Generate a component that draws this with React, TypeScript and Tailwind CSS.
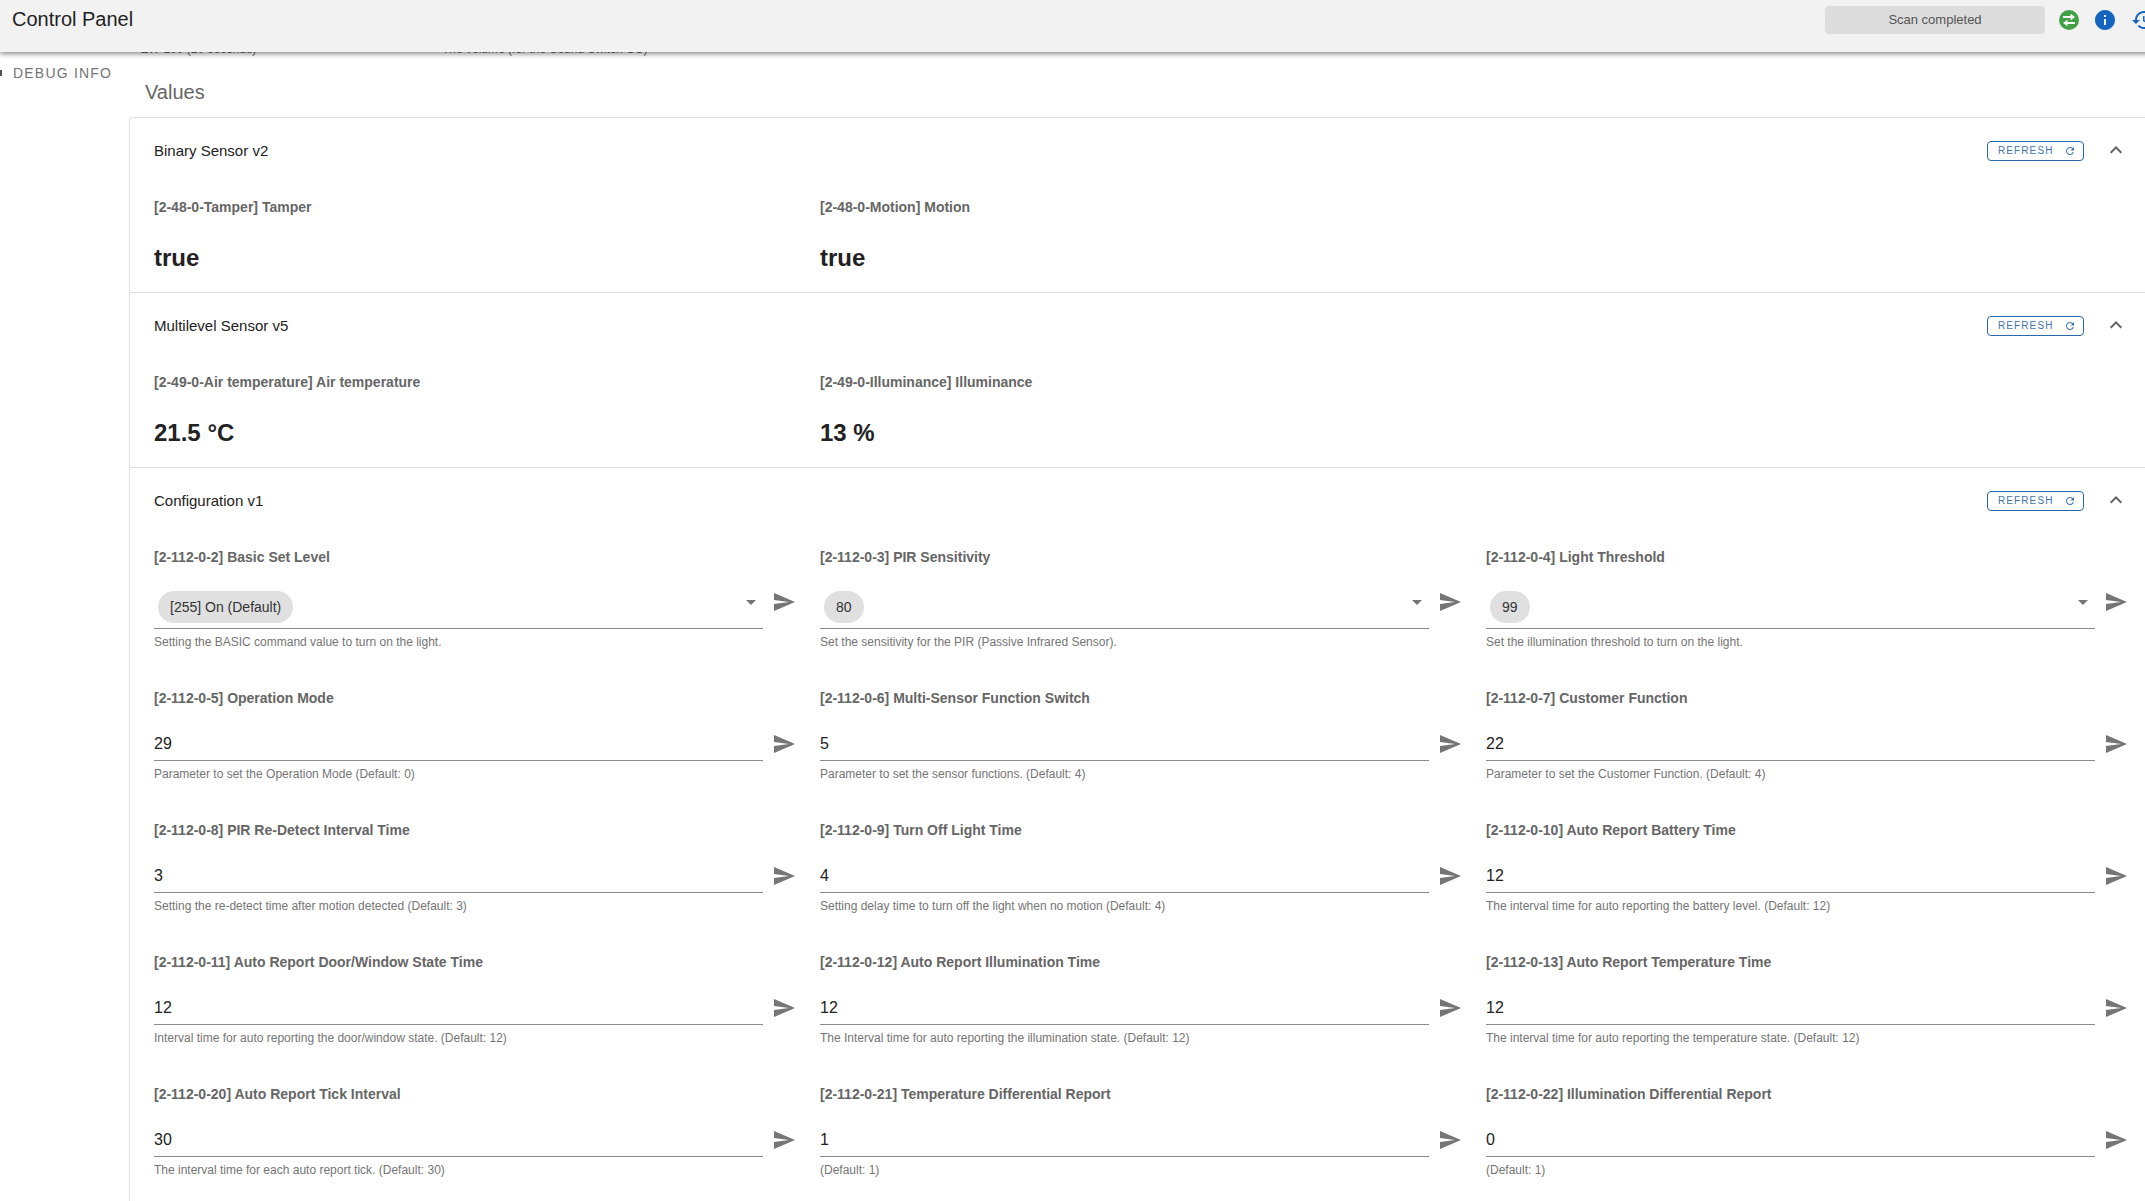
type Field = { label: string; value: string; help: string; chip?: boolean }

const configFields: Field[] = [
    { label: "[2-112-0-2] Basic Set Level", value: "[255] On (Default)", help: "Setting the BASIC command value to turn on the light.", chip: true },
    { label: "[2-112-0-3] PIR Sensitivity", value: "80", help: "Set the sensitivity for the PIR (Passive Infrared Sensor).", chip: true },
    { label: "[2-112-0-4] Light Threshold", value: "99", help: "Set the illumination threshold to turn on the light.", chip: true },
    { label: "[2-112-0-5] Operation Mode", value: "29", help: "Parameter to set the Operation Mode (Default: 0)" },
    { label: "[2-112-0-6] Multi-Sensor Function Switch", value: "5", help: "Parameter to set the sensor functions. (Default: 4)" },
    { label: "[2-112-0-7] Customer Function", value: "22", help: "Parameter to set the Customer Function. (Default: 4)" },
    { label: "[2-112-0-8] PIR Re-Detect Interval Time", value: "3", help: "Setting the re-detect time after motion detected (Default: 3)" },
    { label: "[2-112-0-9] Turn Off Light Time", value: "4", help: "Setting delay time to turn off the light when no motion (Default: 4)" },
    { label: "[2-112-0-10] Auto Report Battery Time", value: "12", help: "The interval time for auto reporting the battery level. (Default: 12)" },
    { label: "[2-112-0-11] Auto Report Door/Window State Time", value: "12", help: "Interval time for auto reporting the door/window state. (Default: 12)" },
    { label: "[2-112-0-12] Auto Report Illumination Time", value: "12", help: "The Interval time for auto reporting the illumination state. (Default: 12)" },
    { label: "[2-112-0-13] Auto Report Temperature Time", value: "12", help: "The interval time for auto reporting the temperature state. (Default: 12)" },
    { label: "[2-112-0-20] Auto Report Tick Interval", value: "30", help: "The interval time for each auto report tick. (Default: 30)" },
    { label: "[2-112-0-21] Temperature Differential Report", value: "1", help: "(Default: 1)" },
    { label: "[2-112-0-22] Illumination Differential Report", value: "0", help: "(Default: 1)" },
]

function MuiIcon({ d, className }: { d: string; className: string }) {
    return (
        <svg viewBox="0 0 24 24" fill="currentColor" className={className}>
            <path d={d} />
        </svg>
    )
}

function SectionHeader({ title }: { title: string }) {
    return (
        <div className="flex h-[67px] items-center pb-[2px] pl-6">
            <div className="w-[1833px] text-[15px] leading-6 text-[#222222]">{title}</div>
            <div className="flex h-5 w-[97px] items-center rounded-[4px] border border-[#2a69ac] pl-[10px] text-[10px] tracking-[1.1px] text-[#3f74ad]">
                REFRESH
                <MuiIcon className="ml-[11px] h-3 w-3" d="M17.65 6.35C16.2 4.9 14.21 4 12 4c-4.42 0-7.99 3.58-7.99 8s3.57 8 7.99 8c3.73 0 6.84-2.55 7.73-6h-2.08c-.82 2.33-3.04 4-5.65 4-3.31 0-6-2.69-6-6s2.69-6 6-6c1.66 0 3.14.69 4.22 1.78L13 11h7V4l-2.35 2.35z" />
            </div>
            <MuiIcon className="-mt-px ml-5 h-6 w-6 text-[#616161]" d="M12 8l-6 6 1.41 1.41L12 10.83l4.59 4.58L18 14z" />
        </div>
    )
}

function ReadOnlyValue({ label, value }: { label: string; value: string }) {
    return (
        <div className="w-[666px]">
            <div className="text-sm leading-5 font-bold text-[#666666]">{label}</div>
            <div className="mt-[25px] text-2xl leading-8 font-bold text-[#222222]">{value}</div>
        </div>
    )
}

function ConfigField({ field }: { field: Field }) {
    return (
        <div className="flex w-[666px]">
            <div className="w-[609px]">
                <div className="text-sm leading-5 font-bold text-[#666666]">{field.label}</div>
                {field.chip ? (
                    <div className="mt-6 flex items-start justify-between border-b border-[#8a8a8a] pb-[5px] pl-1">
                        <div className="flex h-8 items-center rounded-2xl bg-[#e0e0e0] px-3 text-sm text-[#333333]">{field.value}</div>
                        <div className="mt-[9px] mr-[7px] h-0 w-0 border-x-[5px] border-t-[5px] border-x-transparent border-t-[#757575]" />
                    </div>
                ) : (
                    <div className="mt-6 border-b border-[#8a8a8a] pb-1 text-base leading-6 text-[#222222]">{field.value}</div>
                )}
                <div className="mt-[5px] text-xs leading-4 text-[#757575]">{field.help}</div>
            </div>
            <MuiIcon
                className={field.chip ? "mt-[43px] ml-[9px] h-6 w-6 text-[#757575]" : "mt-[44px] ml-[9px] h-6 w-6 text-[#757575]"}
                d="M2.01 21L23 12 2.01 3 2 10l15 2-15 2z"
            />
        </div>
    )
}

export default function App() {
    return (
        <div className="relative h-[1201px] w-[2145px] overflow-hidden bg-white font-['Liberation_Sans',Arial,sans-serif]">
            <header className="absolute top-0 left-0 z-10 flex h-[52px] w-[2167px] items-start bg-[#f2f2f2] pr-3 pl-3 shadow-[0_2px_5px_rgba(0,0,0,0.45)]">
                <div className="mt-[5px] text-xl leading-7 text-[#222222]">Control Panel</div>
                <div className="mt-[6px] ml-auto flex items-center">
                    <div className="flex h-7 w-[220px] items-center justify-center rounded-[4px] bg-[#dcdcdc] text-[13px] text-[#555555]">Scan completed</div>
                    <svg viewBox="0 0 24 24" className="ml-3 h-6 w-6">
                        <circle cx="12" cy="12" r="10" fill="#43a047" />
                        <path fill="#ffffff" d="M6 8h7.5V5.8L18 9l-4.5 3.2V10H6zM18 14h-7.5v-2.2L6 15l4.5 3.2V16H18z" />
                    </svg>
                    <MuiIcon className="ml-3 h-6 w-6 text-[#1565c0]" d="M12 2C6.48 2 2 6.48 2 12s4.48 10 10 10 10-4.48 10-10S17.52 2 12 2zm1 15h-2v-6h2v6zm0-8h-2V7h2v2z" />
                    <MuiIcon className="ml-[14px] h-6 w-6 text-[#1565c0]" d="M13 3c-4.97 0-9 4.03-9 9H1l3.89 3.89.07.14L9 12H6c0-3.87 3.13-7 7-7s7 3.13 7 7-3.13 7-7 7c-1.93 0-3.68-.79-4.94-2.06l-1.42 1.42C8.27 19.99 10.51 21 13 21c4.97 0 9-4.03 9-9s-4.03-9-9-9zm-1 5v5l4.28 2.54.72-1.21-3.5-2.08V8H12z" />
                </div>
            </header>

            <div className="flex">
                <aside className="flex w-[129px] shrink-0 items-center self-start pt-[63px] text-sm leading-5 tracking-[1.2px] text-[#757575]">
                    <div className="mr-[11px] h-[6px] w-[2px] bg-[#555555]" />
                    DEBUG INFO
                </aside>

                <main className="w-[2040px] shrink-0 pt-[41px]">
                    <div className="flex h-4 pl-3 text-xs leading-4 text-[#666666]">
                        <div className="w-[301px]">ZW-100 (10 seconds)</div>
                        <div>The volume (for the Sound Switch CC)</div>
                    </div>

                    <div className="mt-[21px] pl-4 text-xl leading-7 text-[#666666]">Values</div>

                    <div className="mt-[11px] rounded-tl-[4px] border-l border-[#e0e0e0]">
                        <section className="rounded-tl-[4px] border-t border-[#e0e0e0] pb-[18px]">
                            <SectionHeader title="Binary Sensor v2" />
                            <div className="flex pt-3 pl-6">
                                <ReadOnlyValue label="[2-48-0-Tamper] Tamper" value="true" />
                                <ReadOnlyValue label="[2-48-0-Motion] Motion" value="true" />
                            </div>
                        </section>

                        <section className="border-t border-[#e0e0e0] pb-[18px]">
                            <SectionHeader title="Multilevel Sensor v5" />
                            <div className="flex pt-3 pl-6">
                                <ReadOnlyValue label="[2-49-0-Air temperature] Air temperature" value="21.5 °C" />
                                <ReadOnlyValue label="[2-49-0-Illuminance] Illuminance" value="13 %" />
                            </div>
                        </section>

                        <section className="border-t border-[#e0e0e0] pb-10">
                            <SectionHeader title="Configuration v1" />
                            <div className="grid grid-cols-[repeat(3,666px)] gap-y-[38px] pt-3 pl-6">
                                {configFields.map((field) => (
                                    <ConfigField key={field.label} field={field} />
                                ))}
                            </div>
                        </section>
                    </div>
                </main>
            </div>
        </div>
    )
}
